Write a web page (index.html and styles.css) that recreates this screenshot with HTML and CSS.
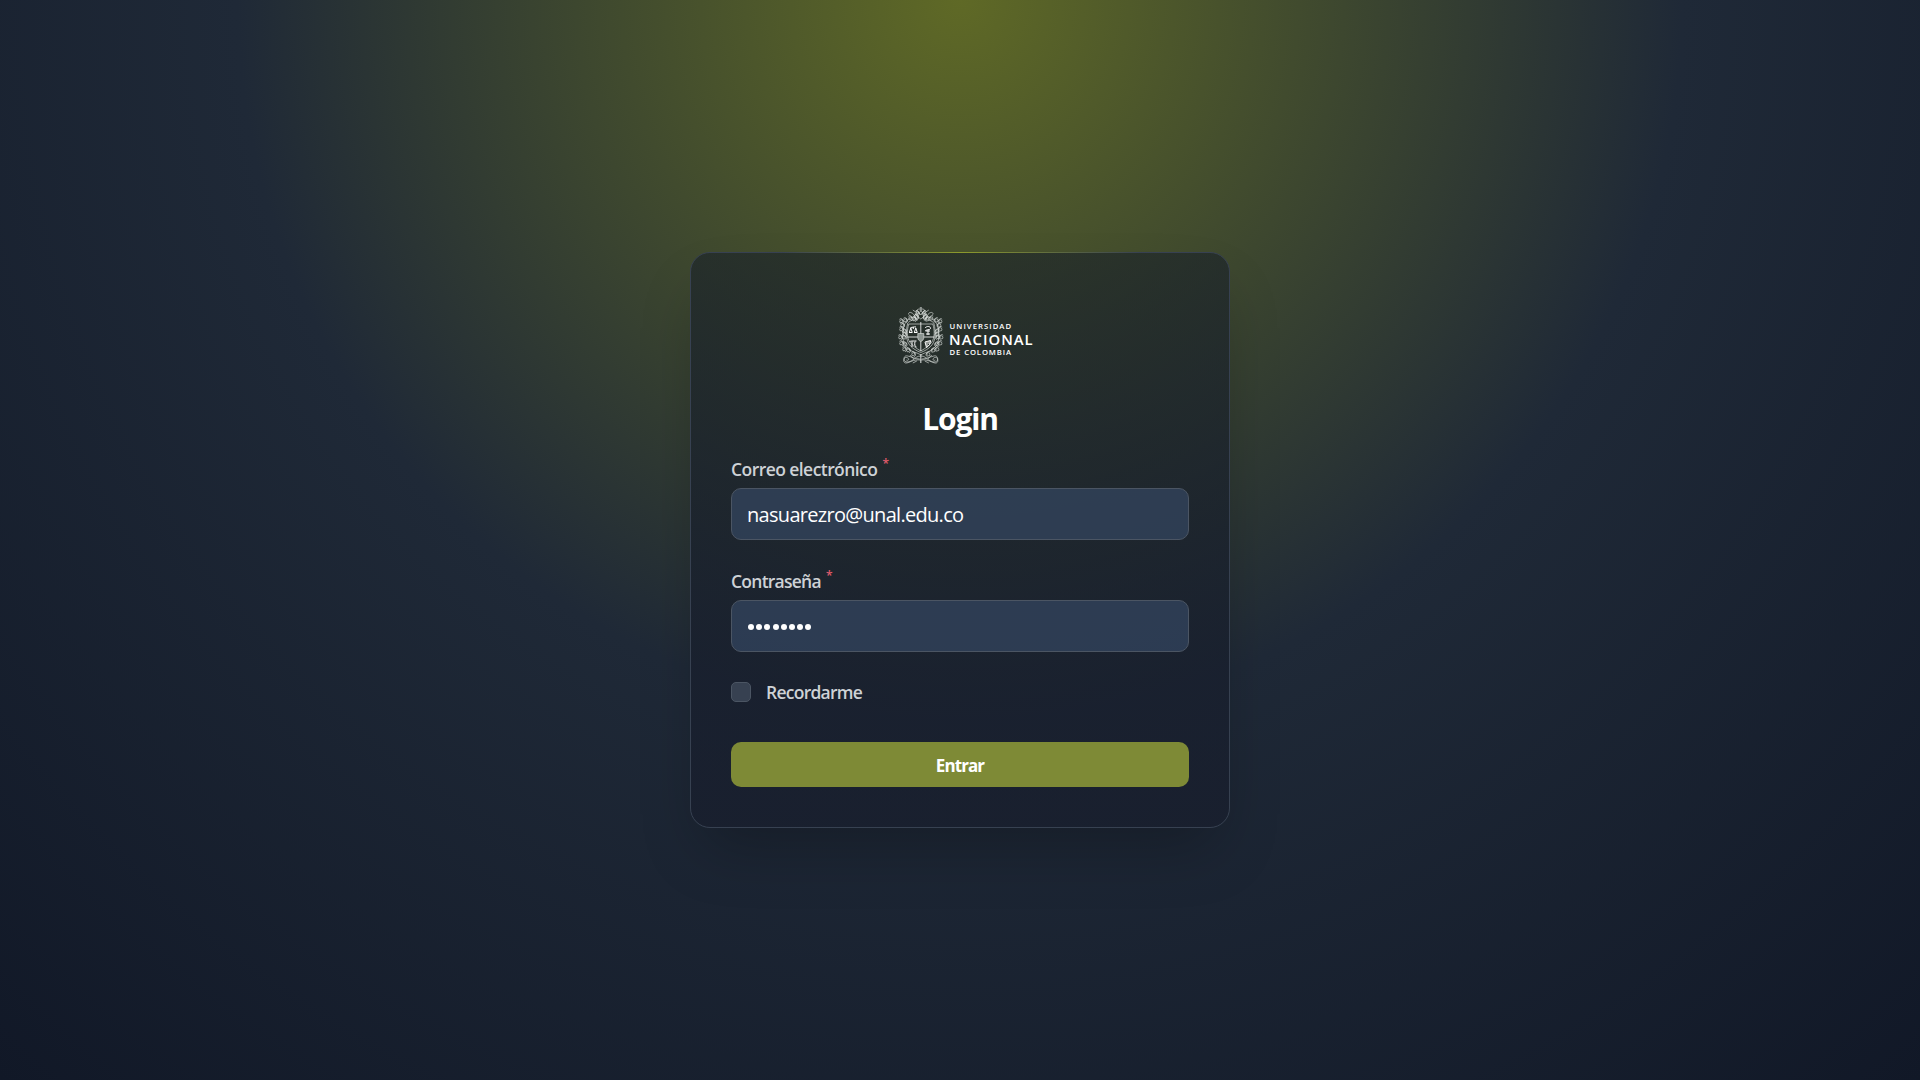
FILE: index.html
```html
<!DOCTYPE html>
<html lang="es">
<head>
<meta charset="utf-8">
<title>Login</title>
<link rel="stylesheet" href="styles.css">
</head>
<body>
<main class="page">
  <form class="card">
    <svg class="logo" viewBox="0 0 136 60" role="img" aria-label="Universidad Nacional de Colombia">
      <defs>
        <g id="leaf"><path d="M0 0c-2.600-1-3.600 1-2.800 2.600 1.600.8 3-.6 2.800-2.600zM0 0c1.400 1.400.8 3.200-.8 3.600M0 0c-1-1.800-2.800-1.600-3.400-.6"/></g>
        <g id="side">
          <path d="M19 12c-4-2-7 0-9.500 2.500C6 18 5 23 5 30c0 8 4 13 10 15.500 3 1.200 6 2 8 3.500"/>
          <path d="M20 14c-5-1-8 1-10 3-1.500 5-1.500 10-1 15 .8 6 5 11 14 14.500"/>
          <use href="#leaf" x="9" y="13"/><use href="#leaf" x="5" y="14"/><use href="#leaf" x="6" y="18"/>
          <use href="#leaf" x="5" y="22"/><use href="#leaf" x="8" y="24"/><use href="#leaf" x="4" y="30"/>
          <use href="#leaf" x="7.500" y="30"/><use href="#leaf" x="5" y="36"/><use href="#leaf" x="8.500" y="37"/>
          <use href="#leaf" x="8" y="42"/><use href="#leaf" x="12" y="43"/><use href="#leaf" x="14" y="11"/>
          <use href="#leaf" x="17" y="47"/><use href="#leaf" x="18" y="12"/><use href="#leaf" x="21" y="6"/>
          <use href="#leaf" x="20" y="10"/><use href="#leaf" x="8" y="27"/>
          <path d="M18 13c-1-4-3-6-5-6.500-2-.5-3 1.500-1.500 2.500M22 3c-3 0-4 2-3 4s2 3 1 6M22 7c-3 0-5 1-6 4M22.500 1v5M19 4l4 5M17 8l6 5M15 4l3 2"/>
          <path d="M23 50c-4 0-5 2-8 4-3 2-7 3-8.500.5C5.500 52 8 50.500 10 52s0 3-1.500 2M22 53c-4 0-8-2-12-3-3-.7-4 1-4 5 0 1 1 2 2 2 4 0 7-4 15-3M12 49l4 4M15 57l4-2M23 48v9"/>
        </g>
      </defs>
      <g class="crest" transform="translate(.8 0)">
        <use href="#side"/><use href="#side" transform="translate(46 0) scale(-1 1)"/>
        <path d="M11 18h24M11 18c-2 6-2 14 1 18 3 4 6 6 11 9 5-3 8-5 11-9 3-4 3-12 1-18"/>
        <path class="quarter" d="M23 16v29M9.500 31h27"/>
        <path class="boss" d="M20 27.500h6v4c0 2-1 3-3 4-2-1-3-2-3-4z"/>
      </g>
      <g class="symbols">
        <path d="M12 26.500h3.500M17 26.500h3.500M13.500 21.500c2 0 3.500-1 5.500-.5M16.300 21v2M12.500 26l1.300-4 1.300 4M17.500 26l1.300-4 1.300 4"/>
        <path d="M28 22c2-2.500 6-1.500 5.500.5s-5 .5-5 2.500h4.500M31 24v5M29 28h4"/>
        <path d="M12.500 36c1-1 1-1 7-1M15 35.500v5.500M18 35.500c-.5 3-.5 5 1.500 5.500"/>
        <path d="M28 36l5.500-1.500c0 3-1 5-4 7zM30 36v4M32 35v3"/>
      </g>
      <g class="wordmark">
        <text x="52.600" y="23.300" font-size="7.700" textLength="61.500">UNIVERSIDAD</text>
        <text x="52.100" y="38.500" font-size="14.800" textLength="83.500">NACIONAL</text>
        <text x="52.600" y="49.200" font-size="7.700" textLength="61.500">DE COLOMBIA</text>
      </g>
    </svg>
    <h1 class="title">Login</h1>
    <div class="field">
      <label class="label" for="email">Correo electrónico<span class="required">*</span></label>
      <input class="input" id="email" type="text" value="nasuarezro@unal.edu.co">
    </div>
    <div class="field">
      <label class="label label-password" for="password">Contraseña<span class="required">*</span></label>
      <div class="input input-secret" id="password"><i></i><i></i><i></i><i></i><i></i><i></i><i></i><i></i></div>
    </div>
    <label class="remember"><span class="checkbox"></span><span class="remember-text">Recordarme</span></label>
    <button class="submit" type="button">Entrar</button>
  </form>
</main>
</body>
</html>
```
FILE: styles.css
```css
* { box-sizing: border-box; }
body {
  margin: 0;
  color: #fff;
  font-family: "Open Sans", "Noto Sans", sans-serif;
}
.page {
  height: 1080px;
  display: flex;
  align-items: center;
  justify-content: center;
  background: radial-gradient(circle at top, #5f6926, #1f2937, #111827 100%);
}
.card {
  position: relative;
  width: 540px;
  height: 576px;
  padding: 53px 40px 40px;
  display: flex;
  flex-direction: column;
  border: 1px solid #374151;
  border-radius: 20px;
  background: linear-gradient(rgba(20, 28, 40, .56), rgba(24, 30, 45, .8));
  box-shadow: 0 31px 62px -15px rgba(0, 0, 0, .25);
}
.card::before {
  content: "";
  position: absolute;
  top: -1px;
  left: 90px;
  right: 90px;
  height: 1px;
  background: linear-gradient(90deg, transparent, #8d9a2c, transparent);
}
.logo { width: 136px; height: 60px; margin-left: 166px; flex: none; }
.crest { fill: none; stroke: #dde1de; stroke-width: .65; }
.crest .quarter { stroke: #fff; stroke-width: .8; }
.crest .boss { fill: #8c9490; }
.symbols { fill: none; stroke: #fff; stroke-width: 1; }
.wordmark { fill: #fff; font-family: "Open Sans", sans-serif; font-weight: 600; }
.title {
  margin: 33px 0 0;
  font-size: 30px;
  line-height: 40px;
  font-weight: 700;
  letter-spacing: -1.200px;
  text-align: center;
}
.field { margin-top: 20px; }
.field + .field { margin-top: 31px; }
.label {
  height: 20px;
  margin-bottom: 9px;
  display: flex;
  gap: 5px;
  font-size: 17.500px;
  line-height: 20px;
  font-weight: 600;
  letter-spacing: -.56px;
  color: #ced2d6;
}
.label-password { letter-spacing: -.75px; }
.required { font-size: 12px; line-height: 10px; font-weight: 600; color: #e25c6c; }
.input {
  display: flex;
  width: 458px;
  height: 52px;
  padding: 0 15px;
  border: 1px solid #4b5563;
  border-radius: 10px;
  background: rgba(53, 71, 98, .7);
  color: #fff;
  font: 400 20px/28px "Open Sans", "Noto Sans", sans-serif;
  letter-spacing: -.7px;
  outline: none;
}
.input-secret { align-items: center; gap: 2.200px; padding: 2px 16px 0; }
.input-secret i { width: 6px; height: 6px; border-radius: 50%; background: #fff; }
.remember { margin-top: 30px; height: 20px; display: flex; gap: 15px; align-items: center; }
.checkbox { width: 20px; height: 20px; border: 1px solid #4b5563; border-radius: 5px; background: #374151; }
.remember-text { font-size: 17.500px; line-height: 20px; font-weight: 600; letter-spacing: -.75px; color: #ced2d6; }
.submit {
  margin-top: 40px;
  height: 45px;
  padding-top: 2px;
  border: 0;
  border-radius: 10px;
  background: #7e8a36;
  color: #fff;
  font: 700 17px/25px "Open Sans", "Noto Sans", sans-serif;
  letter-spacing: -.9px;
}
```
